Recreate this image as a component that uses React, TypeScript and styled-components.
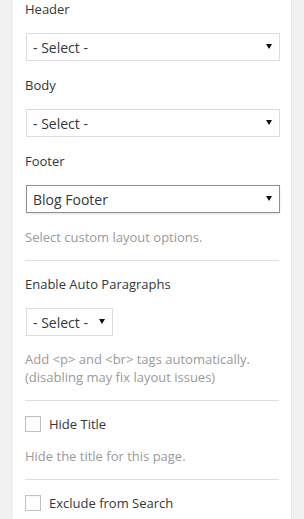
import React from "react";
import styled, { createGlobalStyle } from "styled-components";

const GlobalStyle = createGlobalStyle`
  html, body {
    margin: 0;
    padding: 0;
    background: #f1f1f1;
    overflow: hidden;
  }
  body {
    font-family: "Open Sans", "Liberation Sans", sans-serif;
    color: #32373c;
  }
`;

const Panel = styled.div`
  margin-left: 13px;
  width: 278px;
  min-height: 519px;
  box-sizing: border-box;
  padding: 0 12px;
  background: #fff;
  box-shadow: 1px 0 1px rgba(0, 0, 0, 0.04);
`;

const Field = styled.div`
  display: flex;
  flex-direction: column;
  align-items: flex-start;
  margin-bottom: 15px;

  &:last-of-type {
    margin-bottom: 0;
  }
`;

const Label = styled.label`
  display: block;
  font-size: 13px;
  line-height: 18px;
  color: #32373c;
  margin-bottom: 15px;
`;

const SelectWrap = styled.div<{ $width?: number }>`
  position: relative;
  margin-left: 1px;
  width: ${(p) => (p.$width ? `${p.$width}px` : "100%")};
`;

const Select = styled.select<{ $active?: boolean }>`
  appearance: none;
  -webkit-appearance: none;
  display: block;
  width: 100%;
  height: 28px;
  margin: 0;
  box-sizing: border-box;
  padding: 0 22px 0 6px;
  font-family: "Open Sans", "Liberation Sans", sans-serif;
  font-size: 14px;
  color: #32373c;
  background: #fff;
  border: 1px solid ${(p) => (p.$active ? "#8c8f94" : "#dddddd")};
  border-radius: 0;
  box-shadow: ${(p) =>
    p.$active ? "0 1px 2px rgba(0, 0, 0, 0.12)" : "none"};
  outline: none;
`;

const Arrow = styled.svg`
  position: absolute;
  right: 8px;
  top: 11px;
  width: 6px;
  height: 5px;
  pointer-events: none;
`;

const Help = styled.p`
  margin: 14px 0 0;
  font-size: 13px;
  line-height: 18px;
  color: #9a9a9a;
`;

const Divider = styled.hr`
  border: 0;
  border-top: 1px solid #dedede;
  margin: 14px 0 14px;
`;

const CheckRow = styled.label`
  display: flex;
  align-items: center;
  gap: 8px;
  font-size: 13px;
  line-height: 18px;
  color: #32373c;
`;

const Box = styled.input.attrs({ type: "checkbox" })`
  appearance: none;
  -webkit-appearance: none;
  width: 16px;
  height: 16px;
  margin: 0;
  border: 1px solid #c1c1c1;
  background: #fff;
  box-shadow: inset 0 1px 2px rgba(0, 0, 0, 0.05);
`;

const DropArrow = () => (
  <Arrow viewBox="0 0 6 5">
    <path d="M0 0h6L3 5z" fill="#111" />
  </Arrow>
);

const Dropdown = ({
  value,
  options,
  width,
  active
}: {
  value: string;
  options: string[];
  width?: number;
  active?: boolean;
}) => (
  <SelectWrap $width={width}>
    <Select $active={active} defaultValue={value}>
      {options.map((o) => (
        <option key={o}>{o}</option>
      ))}
    </Select>
    <DropArrow />
  </SelectWrap>
);

export default function App() {
  return (
    <>
      <GlobalStyle />
      <Panel>
        <Field>
          <Label>Header</Label>
          <Dropdown value="- Select -" options={["- Select -"]} />
        </Field>
        <Field>
          <Label>Body</Label>
          <Dropdown value="- Select -" options={["- Select -"]} />
        </Field>
        <Field>
          <Label>Footer</Label>
          <Dropdown
            value="Blog Footer"
            options={["- Select -", "Blog Footer"]}
            active
          />
        </Field>
        <Help>Select custom layout options.</Help>
        <Divider />
        <Field>
          <Label>Enable Auto Paragraphs</Label>
          <Dropdown value="- Select -" options={["- Select -"]} width={87} />
        </Field>
        <Help>
          Add &lt;p&gt; and &lt;br&gt; tags automatically.
          <br />
          (disabling may fix layout issues)
        </Help>
        <Divider />
        <CheckRow>
          <Box />
          Hide Title
        </CheckRow>
        <Help>Hide the title for this page.</Help>
        <Divider />
        <CheckRow>
          <Box />
          Exclude from Search
        </CheckRow>
      </Panel>
    </>
  );
}
